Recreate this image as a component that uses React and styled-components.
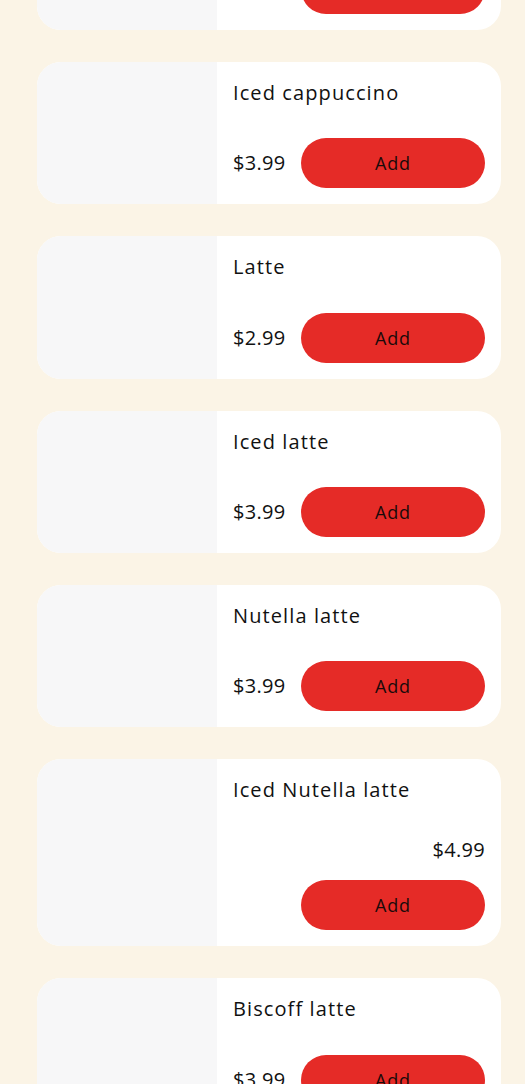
import React from 'react';
import styled, { createGlobalStyle } from 'styled-components';

const GlobalStyle = createGlobalStyle`
  html, body {
    margin: 0;
    padding: 0;
    background: #fbf4e6;
  }
  body {
    font-family: "Open Sans", "Liberation Sans", sans-serif;
    color: #111;
  }
`;

const drinks = [
  { name: 'Cappuccino', price: '$2.99' },
  { name: 'Iced cappuccino', price: '$3.99' },
  { name: 'Latte', price: '$2.99' },
  { name: 'Iced latte', price: '$3.99' },
  { name: 'Nutella latte', price: '$3.99' },
  { name: 'Iced Nutella latte', price: '$4.99', stacked: true },
  { name: 'Biscoff latte', price: '$3.99' },
];

function App() {
  return (
    <>
      <GlobalStyle />
      <Page>
        <MenuList>
          {drinks.map((d) => (
            <Card key={d.name}>
              <Thumb />
              <Info>
                <Title>{d.name}</Title>
                <Actions $stacked={d.stacked}>
                  <Price>{d.price}</Price>
                  <AddButton>Add</AddButton>
                </Actions>
              </Info>
            </Card>
          ))}
        </MenuList>
      </Page>
    </>
  );
}

const Page = styled.div`
  height: 1084px;
  overflow: hidden;
  padding: 0 24px 0 37px;
`;

// the list is scrolled down a bit, so the first card shows only its bottom
const MenuList = styled.div`
  margin-top: -112.25px;
  display: flex;
  flex-direction: column;
  gap: 32px;
  width: 464px;
`;

const Card = styled.div`
  display: flex;
  background: #fff;
  border-radius: 24px;
  overflow: hidden;
`;

const Thumb = styled.div`
  flex: 0 0 180px;
  background: #f7f7f8;
`;

const Info = styled.div`
  flex: 1;
  min-width: 0;
  padding: 16px;
  display: flex;
  flex-direction: column;
`;

const Title = styled.h3`
  margin: 0 0 30.25px;
  font-size: 20px;
  line-height: 30px;
  font-weight: 400;
  letter-spacing: 1.1px;
`;

const Actions = styled.div`
  display: flex;
  flex-direction: ${(p) => (p.$stacked ? 'column' : 'row')};
  align-items: ${(p) => (p.$stacked ? 'flex-end' : 'center')};
  justify-content: space-between;
  gap: ${(p) => (p.$stacked ? '15px' : '16px')};
`;

const Price = styled.span`
  flex: 0 1 auto;
  min-width: 0;
  font-size: 20px;
  line-height: 30px;
  letter-spacing: 0.3px;
  white-space: nowrap;
`;

const AddButton = styled.button`
  flex-shrink: 0;
  width: 184px;
  height: 50px;
  border: none;
  border-radius: 25px;
  background: #e52b27;
  color: #1a0a0a;
  font-family: inherit;
  font-size: 18px;
  letter-spacing: 0.8px;
  cursor: pointer;
`;

export default App;
